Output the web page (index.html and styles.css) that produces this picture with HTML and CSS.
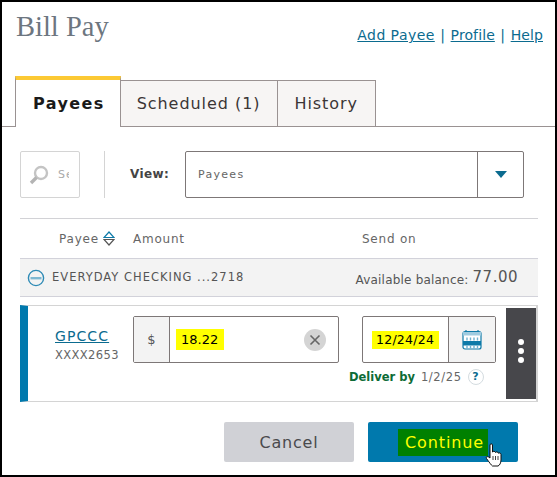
FILE: index.html
```html
<!DOCTYPE html>
<html lang="en">

<head>
    <meta charset="UTF-8" />
    <meta name="viewport" content="width=device-width, initial-scale=1.0" />
    <title>Bill Pay</title>
    <link rel="stylesheet" href="styles.css">
</head>

<body>
    <div class="frame">
        <header class="top">
            <h1>Bill Pay</h1>
            <nav class="links">
                <a href="#">Add Payee</a><span class="sep">|</span><a href="#">Profile</a><span class="sep">|</span><a href="#">Help</a>
            </nav>
        </header>

        <div class="tabs">
            <div class="tab active">Payees</div>
            <div class="tab">Scheduled (1)</div>
            <div class="tab">History</div>
        </div>

        <div class="filters">
            <div class="search">
                <svg width="22" height="22" viewBox="0 0 22 22">
                    <circle cx="13" cy="9" r="6" fill="none" stroke="#c4c4c4" stroke-width="2.4" />
                    <path d="M8.5 13.5 L3 19" stroke="#b4b4b4" stroke-width="3.4" />
                </svg>
                <span class="search-text">Se</span>
            </div>
            <div class="vline"></div>
            <label class="view-label">View:</label>
            <div class="select">
                <span class="select-value">Payees</span>
                <span class="select-arrow"><i></i></span>
            </div>
        </div>

        <div class="columns">
            <span class="col-payee">Payee</span>
            <svg class="sort" width="12" height="15" viewBox="0 0 12 15">
                <path d="M6 1 L11 6.5 H1 Z" fill="none" stroke="#0e7aa8" stroke-width="1.2" />
                <path d="M6 14 L11 8.5 H1 Z" fill="none" stroke="#555" stroke-width="1.2" />
            </svg>
            <span class="col-amount">Amount</span>
            <span class="col-send">Send on</span>
        </div>

        <div class="account">
            <svg width="18" height="18" viewBox="0 0 18 18">
                <circle cx="9" cy="9" r="7.6" fill="none" stroke="#2d8ab5" stroke-width="1.4" />
                <rect x="3.5" y="8" width="11" height="2.4" fill="#7db8d2" />
            </svg>
            <span class="account-name">EVERYDAY CHECKING ...2718</span>
            <span class="balance">Available balance: <b>77.00</b></span>
        </div>

        <div class="payment">
            <div class="payee">
                <a href="#">GPCCC</a>
                <div class="acct-no">XXXX2653</div>
            </div>
            <div class="amount-field">
                <div class="dollar">$</div>
                <div class="amount-input">
                    <span class="hl-amount">18.22</span>
                    <span class="clear">
                        <svg width="12" height="12" viewBox="0 0 12 12">
                            <path d="M1.5 1.5 L10.5 10.5 M10.5 1.5 L1.5 10.5" stroke="#666" stroke-width="1.6" />
                        </svg>
                    </span>
                </div>
            </div>
            <div class="date-col">
                <div class="date-field">
                    <div class="date-input"><span class="hl-date">12/24/24</span></div>
                    <div class="cal">
                        <svg width="20" height="21" viewBox="0 0 20 21">
                            <path d="M4 3 V1 M16 3 V1" stroke="#0e7aa8" stroke-width="1.2" />
                            <rect x="1" y="2.5" width="18" height="17.5" rx="2" fill="#fff" stroke="#0e7aa8" stroke-width="1.2" />
                            <rect x="1" y="3" width="18" height="3.5" fill="#9fcbe0" />
                            <rect x="1" y="12" width="18" height="4.5" fill="#0e7aa8" />
                            <path d="M5 8.5 V11.5 M8.5 8.5 V11.5 M12 8.5 V11.5 M15.5 8.5 V11.5 M5 16.5 V19.5 M8.5 16.5 V19.5 M12 16.5 V19.5 M15.5 16.5 V19.5" stroke="#6fb1cf" stroke-width="1.4" />
                        </svg>
                    </div>
                </div>
                <div class="deliver">
                    <b>Deliver by</b> <span class="deliver-date">1/2/25</span> <span class="help">?</span>
                </div>
            </div>
            <div class="more"><i></i><i></i><i></i></div>
        </div>

        <div class="actions">
            <button class="cancel">Cancel</button>
            <button class="continue"><span>Continue</span></button>
            <svg class="hand" width="18" height="24" viewBox="0 0 18 24">
                <path d="M5 2 C5 .5 7.5 .5 7.5 2 V9 C8 8 10 8 10.5 9.5 C11 8.5 13 8.7 13.3 10.2 C14 9.5 16 10 16 11.5 V17 C16 20 14.5 22.5 13 23 H7.5 C6 22 4.5 19.5 1.5 15.5 C.5 14 2.5 12.5 5 15 Z" fill="#fff" stroke="#111" stroke-width="1" />
                <path d="M8 13 V17 M10.5 13 V17 M13 13 V17" stroke="#111" stroke-width=".8" />
            </svg>
        </div>
    </div>
</body>

</html>
```

FILE: styles.css
```css
body {
    margin: 0;
    padding: 0;
    font-family: "DejaVu Sans", Verdana, sans-serif;
    background: white;
}

.frame {
    box-sizing: border-box;
    width: 557px;
    height: 477px;
    border: 2px solid black;
    overflow: hidden;
}

.top {
    display: flex;
    justify-content: space-between;
    align-items: flex-start;
    height: 74px;
    padding: 0 12px 0 14px;
}

h1 {
    margin: 8px 0 0;
    font-family: "Liberation Serif", "Times New Roman", serif;
    font-size: 28.5px;
    line-height: 34px;
    font-weight: normal;
    color: #6d7680;
}

.links {
    margin-top: 24px;
    font-size: 14px;
    line-height: 18px;
    letter-spacing: .1px;
    color: #0b6b8f;
}

.links a {
    color: #0b6b8f;
}

.links a:first-child {
    letter-spacing: .45px;
}

.sep {
    margin: 0 5.5px;
}

.tabs {
    display: flex;
    align-items: flex-end;
    height: 50px;
    padding-left: 13px;
    border-bottom: 1px solid #9a9292;
}

.tab {
    box-sizing: border-box;
    height: 47px;
    margin-bottom: -1px;
    padding: 0 17px 0 16px;
    margin-left: -1px;
    background: #f7f5f4;
    border: 1px solid #9a9292;
    font-size: 16px;
    line-height: 46px;
    letter-spacing: .95px;
    color: #3b3636;
}

.tab.active {
    height: 51px;
    margin-left: 0;
    padding: 0 15px 0 17px;
    background: white;
    border-top: 4px solid #fcc934;
    border-bottom: 0;
    font-weight: bold;
    line-height: 47px;
    letter-spacing: 1.4px;
    color: #1a1a1a;
}

.filters {
    display: flex;
    align-items: stretch;
    height: 47px;
    margin: 24px 0 0 18px;
    width: 504px;
}

.search {
    box-sizing: border-box;
    width: 60px;
    display: flex;
    align-items: center;
    padding-left: 7px;
    gap: 8px;
    border: 1px solid #d4d4d4;
    border-radius: 2px;
    font-size: 11px;
    letter-spacing: 1px;
    color: #aaa;
    overflow: hidden;
}

.search-text {
    width: 11px;
    overflow: hidden;
}

.vline {
    width: 1px;
    margin-left: 24px;
    background: #d4d4d4;
}

.view-label {
    margin-left: 25px;
    width: 55px;
    font-size: 12px;
    font-weight: bold;
    line-height: 46px;
    letter-spacing: .4px;
    color: #444;
}

.select {
    flex: 1;
    display: flex;
    border: 1px solid #7d7777;
    border-radius: 2px;
}

.select-value {
    flex: 1;
    padding-left: 12px;
    font-size: 11px;
    line-height: 45px;
    letter-spacing: 1.3px;
    color: #666;
}

.select-arrow {
    width: 45px;
    display: flex;
    align-items: center;
    justify-content: center;
    border-left: 1px solid #7d7777;
}

.select-arrow i {
    width: 0;
    height: 0;
    border-left: 6px solid transparent;
    border-right: 6px solid transparent;
    border-top: 7px solid #0b6b8f;
}

.columns {
    display: flex;
    align-items: center;
    height: 39px;
    margin: 20px 17px 0 18px;
    border-top: 1px solid #d2d2d6;
    font-size: 12px;
    letter-spacing: .8px;
    color: #666;
}

.col-payee {
    margin-left: 39px;
}

.sort {
    margin-left: 4px;
}

.col-amount {
    margin-left: 18px;
    width: 229px;
}

.account {
    display: flex;
    align-items: center;
    box-sizing: border-box;
    height: 39px;
    margin: 0 17px 0 18px;
    padding: 0 20px 0 7px;
    background: #f3f3f3;
    border-top: 1px solid #d2d2da;
    border-bottom: 1px solid #d2d2da;
    font-size: 12px;
    color: #555;
}

.account-name {
    flex: 1;
    margin: 0 0 2px 7px;
    font-size: 11.5px;
    letter-spacing: 1px;
}

.balance {
    margin-top: 3px;
    font-size: 12px;
    letter-spacing: .2px;
}

.balance b {
    position: relative;
    top: -2px;
    font-size: 15px;
    font-weight: normal;
    letter-spacing: .5px;
}

.payment {
    box-sizing: border-box;
    display: flex;
    height: 97px;
    margin: 8px 17px 0 18px;
    border: 1px solid #d4d4d4;
    border-left: 8px solid #0079ad;
    border-right-width: 2px;
}

.payee {
    width: 105px;
    padding: 20px 0 0 27px;
    box-sizing: border-box;
    font-size: 11.5px;
    letter-spacing: .4px;
    color: #666;
}

.payee a {
    display: block;
    font-size: 14px;
    line-height: 20px;
    letter-spacing: 1.1px;
    color: #0b6b8f;
}

.acct-no {
    margin-top: 2px;
    line-height: 15px;
}

.amount-field {
    box-sizing: border-box;
    display: flex;
    width: 206px;
    height: 47px;
    margin-top: 10px;
    border: 1px solid #7d7777;
    border-radius: 2px;
}

.dollar {
    width: 35px;
    background: #f3f3f3;
    border-right: 1px solid #7d7777;
    text-align: center;
    font-size: 13px;
    line-height: 45px;
    color: #555;
}

.amount-input {
    flex: 1;
    display: flex;
    align-items: center;
    justify-content: space-between;
    padding: 0 12px 0 6px;
}

.hl-amount {
    padding: 0 6px 0 5px;
    background: #ffff00;
    font-size: 13px;
    line-height: 21px;
    color: black;
}

.clear {
    display: flex;
    align-items: center;
    justify-content: center;
    width: 22px;
    height: 22px;
    border-radius: 50%;
    background: #d4d4d4;
}

.date-col {
    margin-left: 23px;
    margin-top: 10px;
    width: 144px;
}

.date-field {
    box-sizing: border-box;
    display: flex;
    width: 134px;
    height: 47px;
    border: 1px solid #7d7777;
    border-radius: 2px;
}

.date-input {
    flex: 1;
    padding-left: 9px;
    display: flex;
    align-items: center;
}

.hl-date {
    padding: 0 5px 0 4px;
    background: #ffff00;
    font-size: 12.5px;
    line-height: 18px;
    letter-spacing: .25px;
    color: black;
}

.cal {
    width: 46px;
    display: flex;
    align-items: center;
    justify-content: center;
    background: #f3f3f3;
    border-left: 1px solid #7d7777;
}

.deliver {
    display: flex;
    align-items: center;
    justify-content: flex-start;
    gap: 6px;
    margin: 6px 0 0 -13px;
    white-space: nowrap;
    font-size: 11.5px;
    line-height: 16px;
    color: #666;
}

.deliver b {
    color: #0c6b36;
}

.deliver-date {
    letter-spacing: .6px;
}

.help {
    box-sizing: border-box;
    width: 16px;
    height: 16px;
    border: 1px solid #d4dce0;
    border-radius: 50%;
    text-align: center;
    font-size: 11px;
    font-weight: bold;
    line-height: 14px;
    color: #0b6b8f;
}

.more {
    box-sizing: border-box;
    width: 30px;
    height: 91px;
    margin: 2px 0 0 auto;
    padding-bottom: 5px;
    display: flex;
    flex-direction: column;
    align-items: center;
    justify-content: center;
    gap: 3px;
    background: #47474b;
}

.more i {
    width: 6px;
    height: 6px;
    border-radius: 50%;
    background: white;
}

.actions {
    position: relative;
    display: flex;
    gap: 14px;
    margin: 20px 0 0 222px;
}

button {
    height: 40px;
    border: 0;
    border-radius: 2px;
    font-family: inherit;
    font-size: 16px;
}

.cancel {
    width: 130px;
    letter-spacing: .8px;
    background: #d0d1d6;
    color: #4a4a4d;
}

.continue {
    width: 150px;
    letter-spacing: .9px;
    background: #0079ad;
    color: #ffff00;
}

.continue span {
    display: inline-block;
    padding: 0 4px 0 7px;
    background: #008000;
    line-height: 27px;
}

.hand {
    position: absolute;
    left: 261px;
    top: 21px;
}
```
